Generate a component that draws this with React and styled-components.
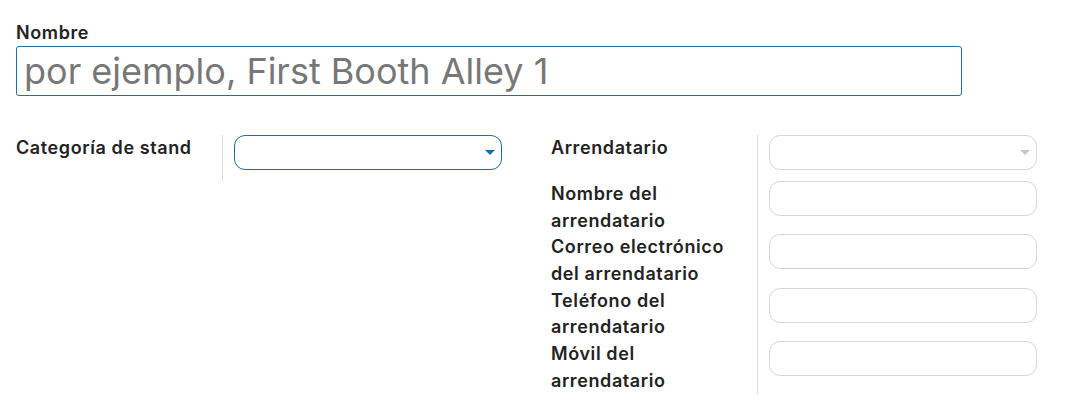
import React from "react";
import styled, { createGlobalStyle } from "styled-components";

const Global = createGlobalStyle`
  html, body { margin: 0; padding: 0; background: #fff; }
  body { font-family: Inter, "Open Sans", sans-serif; color: #222; }
  * { box-sizing: border-box; }
`;

const BLUE = "#1d6da3";

const Sheet = styled.div`
  width: 1075px;
  padding: 19px 16px 0 16px;
`;

const TitleLabel = styled.label`
  display: block;
  font-size: 18px;
  font-weight: 600;
  letter-spacing: 0.6px;
  line-height: 27px;
  color: #222;
`;

const TitleInput = styled.input`
  display: block;
  width: 946px;
  height: 50px;
  border: 1px solid ${BLUE};
  border-radius: 3px;
  padding: 0 7px;
  font-family: Inter, "Open Sans", sans-serif;
  font-size: 36px;
  color: #222;
  outline: none;
  &::placeholder { color: #777; }
`;

const Groups = styled.div`
  display: grid;
  grid-template-columns: 486px 486px;
  column-gap: 49px;
  margin-top: 39px;
  align-items: start;
`;

const Group = styled.div`
  display: grid;
  grid-template-columns: 206px 1fr;
`;

const LabelCell = styled.div`
  font-size: 18px;
  font-weight: 600;
  letter-spacing: 0.6px;
  line-height: 26.67px;
  color: #222;
  min-height: ${(p) => p.$h || 0}px;
  padding-right: 4px;
  white-space: nowrap;
`;

const ValueCell = styled.div`
  border-left: 1px solid #dcdcdc;
  padding-left: 11px;
  min-height: ${(p) => p.$h || 0}px;
`;

const Field = styled.div`
  position: relative;
  width: 268px;
  height: 35px;
  border: 1px solid ${(p) => (p.$active ? BLUE : "#d6d6d6")};
  border-radius: 11px;
  background: #fff;
`;

const Caret = styled.span`
  position: absolute;
  right: 6px;
  top: 14px;
  width: 0;
  height: 0;
  border-left: 5px solid transparent;
  border-right: 5px solid transparent;
  border-top: 5px solid ${(p) => (p.$active ? BLUE : "#c4c4c4")};
`;

const rows = [
  { lines: ["Arrendatario"], select: true, h: 46 },
  { lines: ["Nombre del", "arrendatario"], h: 53.33 },
  { lines: ["Correo electrónico", "del arrendatario"], h: 53.33 },
  { lines: ["Teléfono del", "arrendatario"], h: 53.33 },
  { lines: ["Móvil del", "arrendatario"], h: 53.33 },
];

export default function App() {
  return (
    <>
      <Global />
      <Sheet>
        <TitleLabel>Nombre</TitleLabel>
        <TitleInput placeholder="por ejemplo, First Booth Alley 1" />
        <Groups>
          <Group>
            <LabelCell $h={46}>Categoría de stand</LabelCell>
            <ValueCell $h={46}>
              <Field $active>
                <Caret $active />
              </Field>
            </ValueCell>
          </Group>
          <Group>
            {rows.map((r) => (
              <React.Fragment key={r.lines.join(" ")}>
                <LabelCell $h={r.h}>
                  {r.lines.map((l, i) => (
                    <div key={i}>{l}</div>
                  ))}
                </LabelCell>
                <ValueCell $h={r.h}>
                  <Field>{r.select && <Caret />}</Field>
                </ValueCell>
              </React.Fragment>
            ))}
          </Group>
        </Groups>
      </Sheet>
    </>
  );
}
